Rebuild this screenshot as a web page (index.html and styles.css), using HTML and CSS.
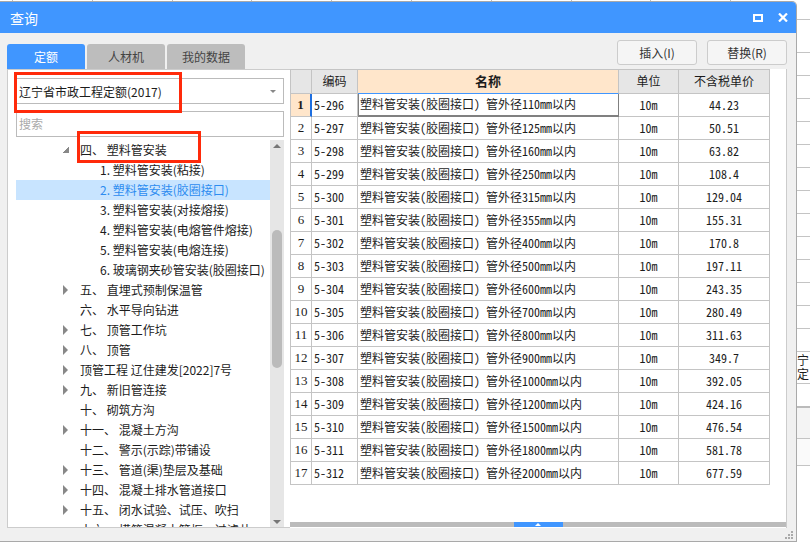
FILE: index.html
```html
<!DOCTYPE html>
<html lang="zh-CN">
<head>
    <meta charset="UTF-8">
    <meta name="viewport" content="width=device-width, initial-scale=1.0">
    <title>查询</title>
    <link rel="stylesheet" href="styles.css">
</head>
<body>
    <!-- sheet behind the dialog -->
    <div class="top-ticks">
        <span></span><span></span><span></span><span></span><span></span><span></span><span></span><span></span><span></span><span></span>
    </div>

    <div class="desk">
        <div class="window">
            <div class="titlebar">
                <span class="title">查询</span>
                <span class="win-btns">
                    <svg width="10" height="8" viewBox="0 0 10 8"><rect x="1" y="1" width="8" height="6" fill="none" stroke="#fff" stroke-width="2"/></svg>
                    <svg width="10" height="9" viewBox="0 0 10 9"><path d="M1 0.5L9 8.5M9 0.5L1 8.5" stroke="#fff" stroke-width="2.2" fill="none"/></svg>
                </span>
            </div>

            <div class="toolbar">
                <div class="tabs">
                    <div class="tab active">定额</div>
                    <div class="tab">人材机</div>
                    <div class="tab">我的数据</div>
                </div>
                <div class="actions">
                    <button type="button">插入(I)</button>
                    <button type="button">替换(R)</button>
                </div>
            </div>

            <div class="content">
                <div class="left-panel">
                    <div class="select-box">
                        <span>辽宁省市政工程定额(2017)</span>
                        <i class="select-arrow"></i>
                    </div>
                    <div class="search-box">搜索</div>
                    <div class="tree-wrap">
                        <div class="tree">
                            <div class="node"><i class="arrow open"></i><span>四、 塑料管安装</span></div>
                            <div class="node sub">1. 塑料管安装(粘接)</div>
                            <div class="node sub selected">2. 塑料管安装(胶圈接口)</div>
                            <div class="node sub">3. 塑料管安装(对接熔接)</div>
                            <div class="node sub">4. 塑料管安装(电熔管件熔接)</div>
                            <div class="node sub">5. 塑料管安装(电熔连接)</div>
                            <div class="node sub">6. 玻璃钢夹砂管安装(胶圈接口)</div>
                            <div class="node"><i class="arrow"></i><span>五、 直埋式预制保温管</span></div>
                            <div class="node"><i class="arrow none"></i><span>六、 水平导向钻进</span></div>
                            <div class="node"><i class="arrow"></i><span>七、 顶管工作坑</span></div>
                            <div class="node"><i class="arrow"></i><span>八、 顶管</span></div>
                            <div class="node"><i class="arrow"></i><span>顶管工程 辽住建发[2022]7号</span></div>
                            <div class="node"><i class="arrow"></i><span>九、 新旧管连接</span></div>
                            <div class="node"><i class="arrow none"></i><span>十、 砌筑方沟</span></div>
                            <div class="node"><i class="arrow"></i><span>十一、 混凝土方沟</span></div>
                            <div class="node"><i class="arrow none"></i><span>十二、 警示(示踪)带铺设</span></div>
                            <div class="node"><i class="arrow"></i><span>十三、 管道(渠)垫层及基础</span></div>
                            <div class="node"><i class="arrow"></i><span>十四、 混凝土排水管道接口</span></div>
                            <div class="node"><i class="arrow"></i><span>十五、 闭水试验、试压、吹扫</span></div>
                            <div class="node"><i class="arrow none"></i><span>十六、 模筑混凝土管框、过滤井</span></div>
                        </div>
                        <div class="scrollbar">
                            <i class="scroll-up"></i>
                            <div class="thumb"></div>
                            <i class="scroll-down"></i>
                        </div>
                    </div>
                </div>

                <div class="right-panel">
                    <table class="grid">
                        <thead>
                            <tr><th class="no"></th><th class="code-head">编码</th><th class="name-head">名称</th><th>单位</th><th>不含税单价</th></tr>
                        </thead>
                        <tbody>
                            <tr class="current"><td class="no">1</td><td class="code">5-296</td><td class="name">塑料管安装(胶圈接口) 管外径110mm以内</td><td>10m</td><td>44.23</td></tr>
                            <tr><td class="no">2</td><td class="code">5-297</td><td class="name">塑料管安装(胶圈接口) 管外径125mm以内</td><td>10m</td><td>50.51</td></tr>
                            <tr><td class="no">3</td><td class="code">5-298</td><td class="name">塑料管安装(胶圈接口) 管外径160mm以内</td><td>10m</td><td>63.82</td></tr>
                            <tr><td class="no">4</td><td class="code">5-299</td><td class="name">塑料管安装(胶圈接口) 管外径250mm以内</td><td>10m</td><td>108.4</td></tr>
                            <tr><td class="no">5</td><td class="code">5-300</td><td class="name">塑料管安装(胶圈接口) 管外径315mm以内</td><td>10m</td><td>129.04</td></tr>
                            <tr><td class="no">6</td><td class="code">5-301</td><td class="name">塑料管安装(胶圈接口) 管外径355mm以内</td><td>10m</td><td>155.31</td></tr>
                            <tr><td class="no">7</td><td class="code">5-302</td><td class="name">塑料管安装(胶圈接口) 管外径400mm以内</td><td>10m</td><td>170.8</td></tr>
                            <tr><td class="no">8</td><td class="code">5-303</td><td class="name">塑料管安装(胶圈接口) 管外径500mm以内</td><td>10m</td><td>197.11</td></tr>
                            <tr><td class="no">9</td><td class="code">5-304</td><td class="name">塑料管安装(胶圈接口) 管外径600mm以内</td><td>10m</td><td>243.35</td></tr>
                            <tr><td class="no">10</td><td class="code">5-305</td><td class="name">塑料管安装(胶圈接口) 管外径700mm以内</td><td>10m</td><td>280.49</td></tr>
                            <tr><td class="no">11</td><td class="code">5-306</td><td class="name">塑料管安装(胶圈接口) 管外径800mm以内</td><td>10m</td><td>311.63</td></tr>
                            <tr><td class="no">12</td><td class="code">5-307</td><td class="name">塑料管安装(胶圈接口) 管外径900mm以内</td><td>10m</td><td>349.7</td></tr>
                            <tr><td class="no">13</td><td class="code">5-308</td><td class="name">塑料管安装(胶圈接口) 管外径1000mm以内</td><td>10m</td><td>392.05</td></tr>
                            <tr><td class="no">14</td><td class="code">5-309</td><td class="name">塑料管安装(胶圈接口) 管外径1200mm以内</td><td>10m</td><td>424.16</td></tr>
                            <tr><td class="no">15</td><td class="code">5-310</td><td class="name">塑料管安装(胶圈接口) 管外径1500mm以内</td><td>10m</td><td>476.54</td></tr>
                            <tr><td class="no">16</td><td class="code">5-311</td><td class="name">塑料管安装(胶圈接口) 管外径1800mm以内</td><td>10m</td><td>581.78</td></tr>
                            <tr><td class="no">17</td><td class="code">5-312</td><td class="name">塑料管安装(胶圈接口) 管外径2000mm以内</td><td>10m</td><td>677.59</td></tr>
                        </tbody>
                    </table>
                    <div class="splitter"><div class="splitter-handle"><i></i></div></div>
                </div>
            </div>

            <div class="statusbar">
                <svg width="9" height="8" viewBox="0 0 9 8" fill="#aaa"><rect x="6" y="0" width="2" height="2"/><rect x="3" y="3" width="2" height="2"/><rect x="6" y="3" width="2" height="2"/><rect x="0" y="6" width="2" height="2"/><rect x="3" y="6" width="2" height="2"/><rect x="6" y="6" width="2" height="2"/></svg>
            </div>

            <!-- red annotation boxes drawn over the screenshot -->
            <div class="mark mark-select"></div>
            <div class="mark mark-node"></div>
        </div>

        <div class="sheet">
            <div class="sheet-row first"></div>
            <div class="sheet-row tall"></div>
            <div class="sheet-row"></div><div class="sheet-row"></div><div class="sheet-row"></div>
            <div class="sheet-row"></div><div class="sheet-row"></div><div class="sheet-row"></div>
            <div class="sheet-row"></div><div class="sheet-row"></div><div class="sheet-row"></div>
            <div class="sheet-row"></div><div class="sheet-row"></div><div class="sheet-row"></div>
            <div class="sheet-row"></div>
            <div class="sheet-row text-row"><div class="clip-text">宁定</div></div>
            <div class="sheet-row plain"></div>
            <div class="sheet-row band"></div>
            <div class="sheet-row shade"></div>
        </div>
    </div>
</body>
</html>
```

FILE: styles.css
```css
body {
    margin: 0;
    width: 810px;
    height: 542px;
    overflow: hidden;
    background-color: #fff;
    font-family: "Noto Sans CJK SC", "Liberation Sans", sans-serif;
    font-size: 12px;
    color: #1c1c1c;
}
.top-ticks {
    display: flex;
    height: 1px;
    padding-left: 12px;
}
.top-ticks span {
    width: 87.6px;
    border-left: 1px solid #bbb;
    box-sizing: border-box;
}
.desk {
    display: flex;
    height: 541px;
}

/* dialog */
.window {
    position: relative;
    display: flex;
    flex-direction: column;
    flex: none;
    box-sizing: border-box;
    width: 797px;
    height: 541px;
    background-color: #f0f0f0;
    border: 1px solid #a9a9a9;
    border-left: none;
    border-top-right-radius: 5px;
}
.titlebar {
    display: flex;
    align-items: center;
    justify-content: space-between;
    flex: none;
    height: 31px;
    padding: 0 8px 0 10px;
    background-color: #4096ff;
    color: #fff;
    border-top-right-radius: 4px;
}
.title {
    font-size: 14px;
}
.win-btns {
    display: flex;
    align-items: center;
    gap: 15px;
}
.toolbar {
    display: flex;
    justify-content: space-between;
    align-items: flex-end;
    flex: none;
    height: 36px;
    padding: 0 9px 0 7px;
}
.tabs {
    display: flex;
    gap: 2px;
}
.tab {
    width: 78px;
    height: 25px;
    line-height: 26px;
    text-align: center;
    background-color: #bdbdbd;
    color: #444;
    border-radius: 3px 3px 0 0;
}
.tab.active {
    background-color: #4096ff;
    color: #fff;
}
.actions {
    display: flex;
    gap: 10px;
    align-self: flex-start;
    margin-top: 7px;
}
.actions button {
    box-sizing: border-box;
    width: 80px;
    height: 25px;
    padding: 0;
    background-color: #f5f5f5;
    border: 1px solid #ccc;
    border-radius: 3px;
    color: #333;
    font-family: inherit;
    font-size: 12px;
}

.content {
    display: flex;
    flex: none;
    height: 459px;
    padding-left: 7px;
}

/* left side */
.left-panel {
    display: flex;
    flex-direction: column;
    box-sizing: border-box;
    flex: none;
    width: 283px;
    padding: 8px 6px 0 8px;
    background-color: #fff;
    border: 1px solid #ccc;
    border-right: none;
}
.select-box {
    display: flex;
    align-items: center;
    justify-content: space-between;
    box-sizing: border-box;
    flex: none;
    height: 26px;
    padding: 0 7px 0 2px;
    border: 1px solid #bbb;
}
.select-arrow {
    width: 0;
    height: 0;
    border-left: 3px solid transparent;
    border-right: 3px solid transparent;
    border-top: 3px solid #888;
}
.search-box {
    box-sizing: border-box;
    flex: none;
    height: 26px;
    line-height: 24px;
    margin-top: 7px;
    padding-left: 2px;
    border: 1px solid #bbb;
    color: #aaa;
}
.tree-wrap {
    display: flex;
    flex: 1;
    min-height: 0;
    margin-top: 3px;
}
.tree {
    flex: 1;
    overflow: hidden;
}
.node {
    display: flex;
    align-items: center;
    box-sizing: border-box;
    height: 20px;
    padding-left: 47px;
    padding-bottom: 1px;
    white-space: nowrap;
}
.node.sub {
    padding-left: 84px;
}
.node.selected {
    background-color: #c8e4ff;
    color: #2d8cf0;
}
.arrow {
    flex: none;
    width: 0;
    height: 0;
    margin-right: 12px;
    border-top: 5px solid transparent;
    border-bottom: 5px solid transparent;
    border-left: 5px solid #888;
}
.arrow.open {
    width: 6px;
    height: 6px;
    margin-right: 11px;
    border: none;
    background: linear-gradient(135deg, transparent 50%, #888 50%);
}
.arrow.none {
    border-color: transparent;
}
.scrollbar {
    display: flex;
    flex-direction: column;
    align-items: center;
    flex: none;
    width: 14px;
    background-color: #e6e6e6;
}
.scroll-up {
    margin-top: 4px;
    border-left: 4px solid transparent;
    border-right: 4px solid transparent;
    border-bottom: 4px solid #777;
}
.thumb {
    width: 10px;
    height: 138px;
    margin-top: 82px;
    background-color: #bbb;
    border-radius: 5px;
}
.scroll-down {
    margin-top: auto;
    margin-bottom: 3px;
    border-left: 4px solid transparent;
    border-right: 4px solid transparent;
    border-top: 4px solid #777;
}

/* right side */
.right-panel {
    display: flex;
    flex-direction: column;
    box-sizing: border-box;
    flex: none;
    width: 497px;
    background-color: #fff;
    border-right: 1px solid #ccc;
}
.grid {
    flex: none;
    width: 480px;
    table-layout: fixed;
    border-collapse: separate;
    border-spacing: 0;
    font-feature-settings: "hwid";
}
.grid th,
.grid td {
    box-sizing: border-box;
    height: 23px;
    padding: 0 0 1px;
    line-height: 14px;
    text-align: center;
    font-weight: normal;
    white-space: nowrap;
    overflow: hidden;
    border-right: 1px solid #c4c4c4;
    border-bottom: 1px solid #c4c4c4;
}
.grid th {
    height: 25px;
    background-color: #e6e6e6;
    border-top: 1px solid #c4c4c4;
    font-feature-settings: normal;
}
.grid th.no,
.grid td.no {
    width: 22px;
    border-left: 1px solid #c4c4c4;
}
.grid td.no {
    font-family: "Liberation Serif", serif;
    font-size: 13px;
}
.grid th.code-head {
    width: 46px;
}
.grid th.name-head {
    width: 261px;
    background-color: #ffe6cb;
    font-size: 13px;
    font-weight: bold;
    border-bottom-color: #4096ff;
}
.grid th:nth-child(4) {
    width: 60px;
}
.grid th:nth-child(5) {
    width: 91px;
}
.grid td.code,
.grid td.name {
    text-align: left;
    padding-left: 2px;
}
.current td.no {
    background-color: #ffe6cb;
    font-weight: bold;
    border-right: 2px solid #1e6fe0;
}
.current td.name {
    border-left: 1px solid #808080;
    border-right: 1px solid #808080;
    border-bottom: 2px solid #808080;
    padding-left: 1px;
}
.splitter {
    display: flex;
    justify-content: center;
    flex: none;
    height: 5px;
    margin-top: auto;
    margin-bottom: 1px;
    background-color: #bbb;
}
.splitter-handle {
    display: flex;
    align-items: center;
    justify-content: center;
    width: 49px;
    background-color: #4096ff;
}
.splitter-handle i {
    border-left: 3px solid transparent;
    border-right: 3px solid transparent;
    border-bottom: 3px solid #fff;
}
.statusbar {
    display: flex;
    justify-content: flex-end;
    align-items: flex-end;
    flex: 1;
    padding: 0 2px 2px 0;
}

/* annotation */
.mark {
    position: absolute;
    box-sizing: border-box;
    border: 3px solid #ff2a0a;
}
.mark-select {
    left: 14px;
    top: 70px;
    width: 168px;
    height: 41px;
}
.mark-node {
    left: 77px;
    top: 129px;
    width: 124px;
    height: 32px;
}

/* sheet on the right of the dialog */
.sheet {
    flex: 1;
    min-width: 0;
}
.sheet-row {
    box-sizing: border-box;
    height: 23px;
    border-bottom: 1px solid #c4c4c4;
}
.sheet-row.first {
    height: 19px;
}
.sheet-row.tall {
    height: 33px;
}
.sheet-row.text-row {
    height: 32px;
    padding-top: 1px;
}
.clip-text {
    width: 13px;
    line-height: 14px;
    overflow: hidden;
}
.sheet-row.plain {
    height: 22px;
    border-bottom: none;
}
.sheet-row.band {
    height: 33px;
    background-color: #f4f4f4;
    border-top: 2px solid #bbb;
}
.sheet-row.shade {
    height: 27px;
    background-color: #fafafa;
}
```
